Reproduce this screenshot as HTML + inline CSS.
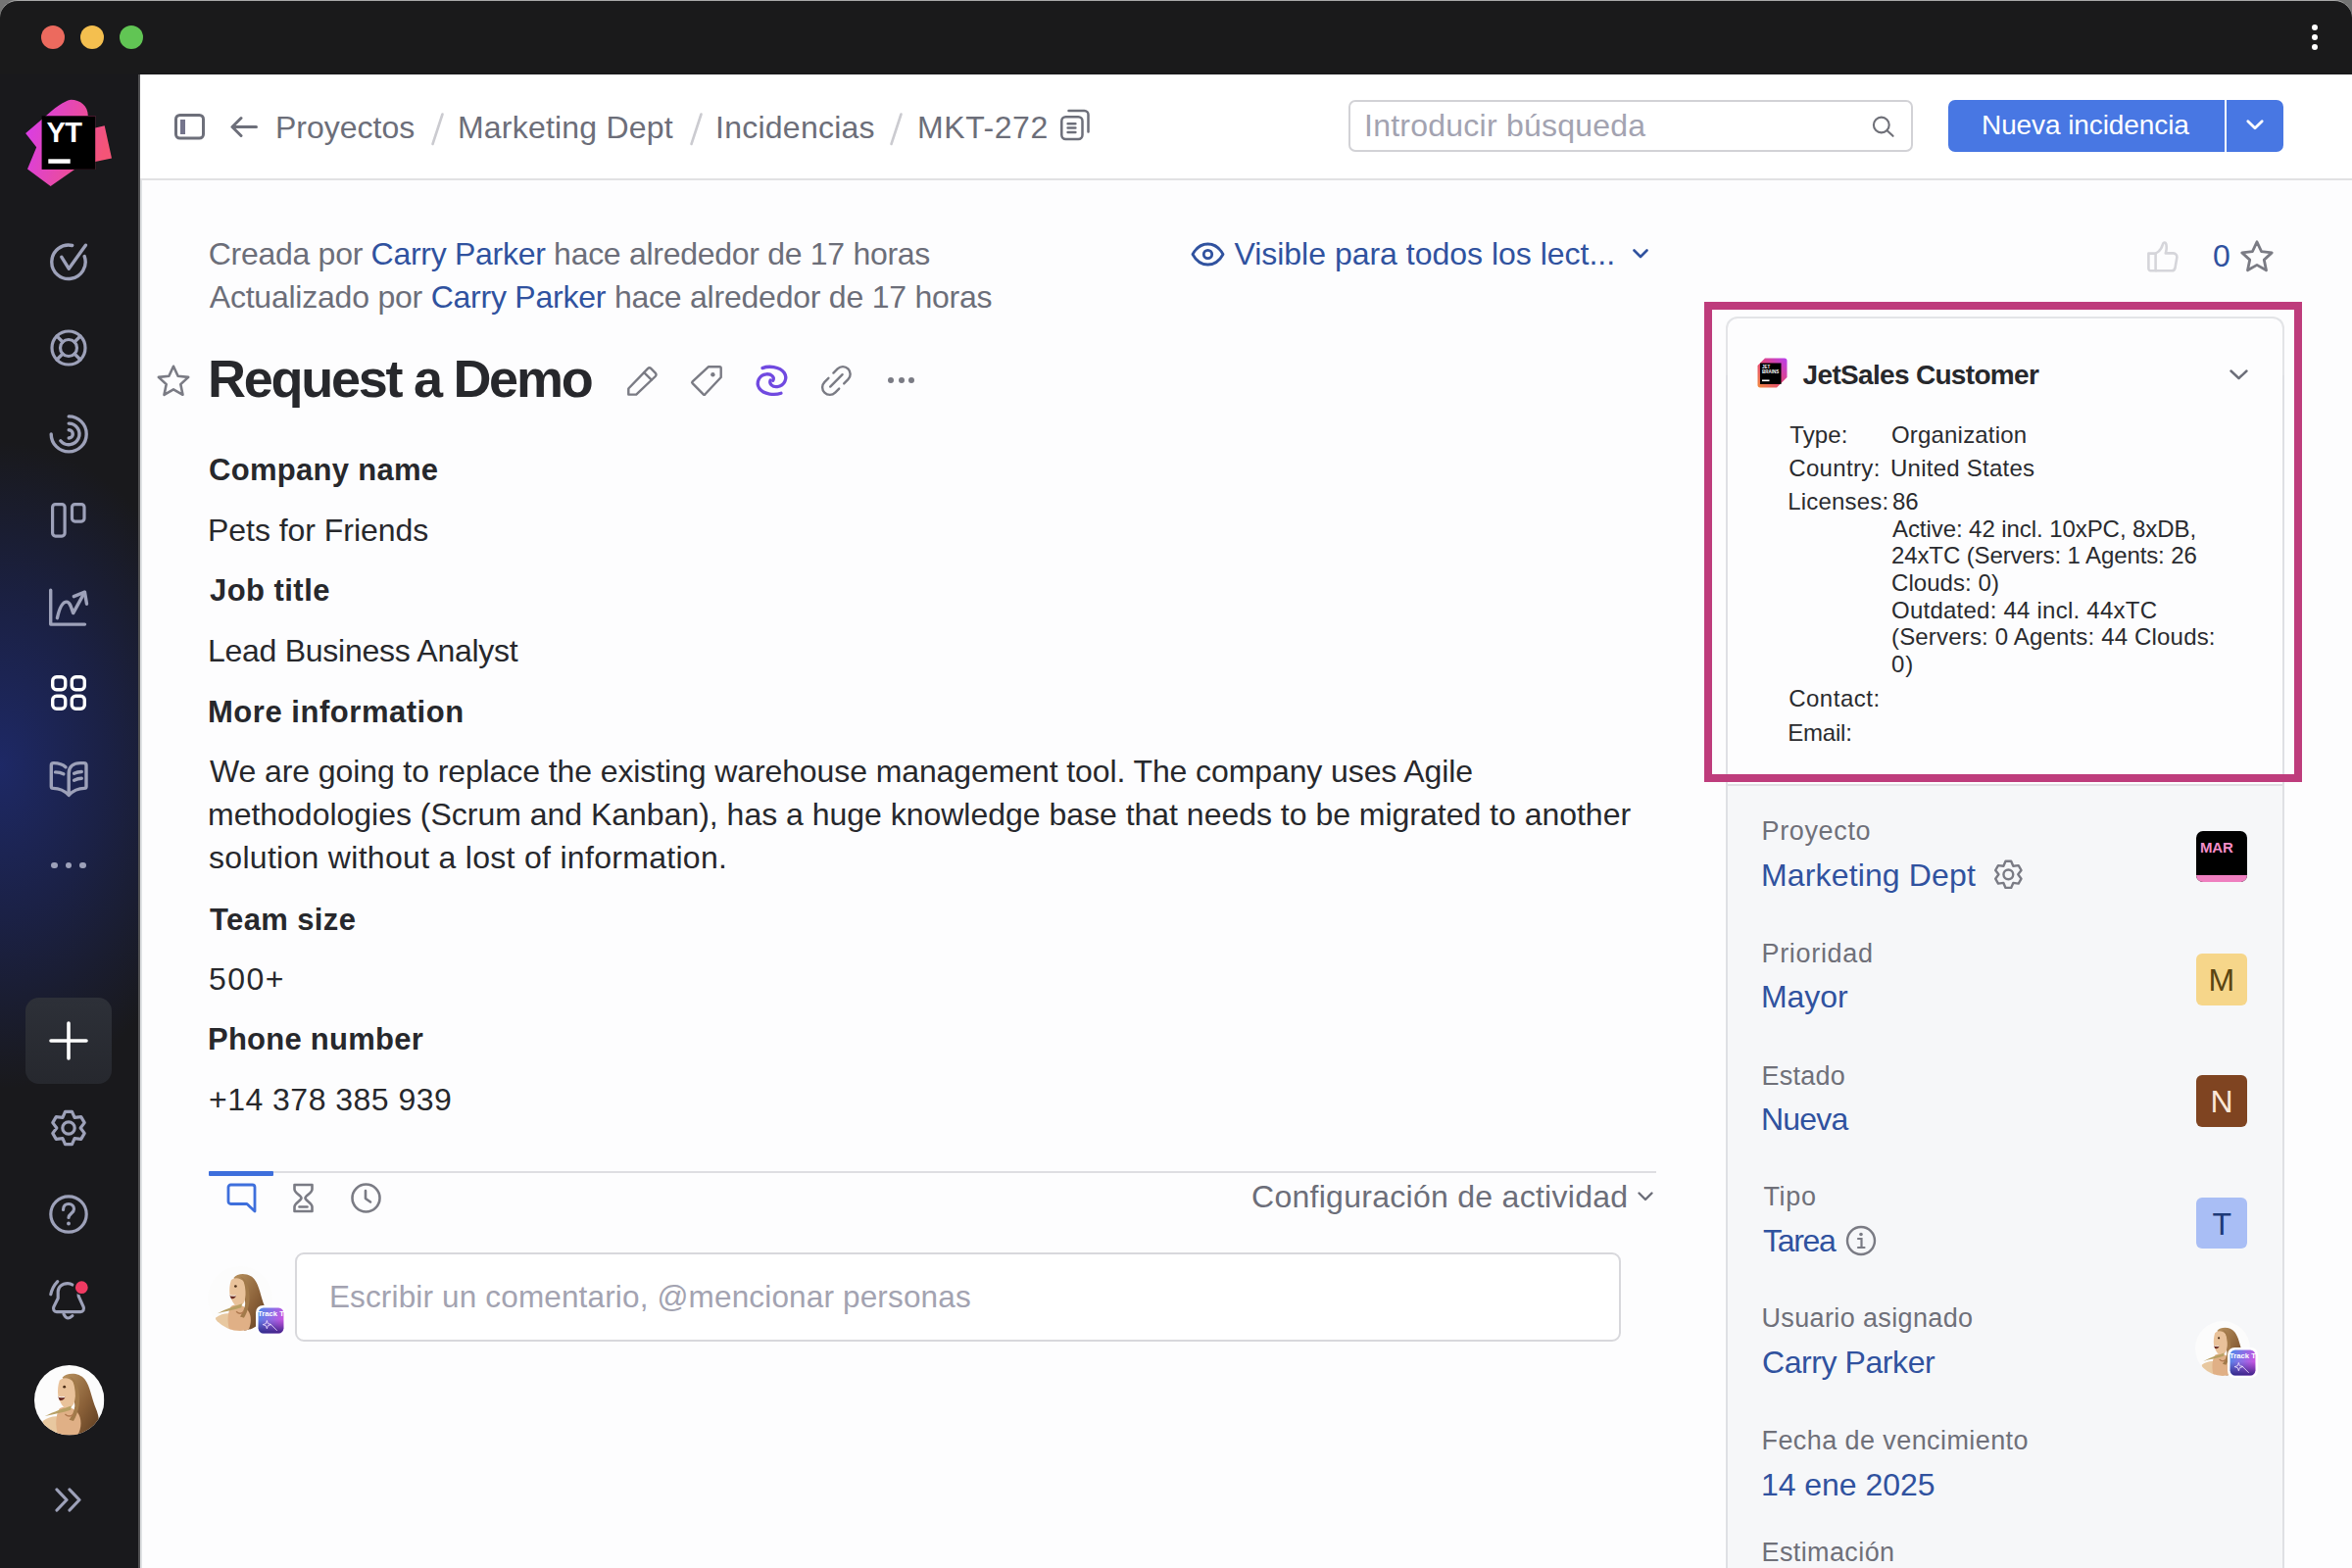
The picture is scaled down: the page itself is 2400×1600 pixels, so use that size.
<!DOCTYPE html><html><head><meta charset="utf-8"><style>
html,body{margin:0;padding:0;width:2400px;height:1600px;overflow:hidden;background:#747474;}
body{position:relative;font-family:"Liberation Sans",sans-serif;}
.t{position:absolute;line-height:1;white-space:nowrap;}
svg{overflow:visible}
</style></head><body>

<div style="position:absolute;left:0px;top:0px;width:2400px;height:1600px;background:#1a1a1b;border-radius:18px 18px 0 0;box-sizing:border-box;border-top:1.6px solid #a9a9a9;"></div>
<div style="position:absolute;left:42px;top:26px;width:24px;height:24px;background:#ec6a5e;border-radius:50%;"></div>
<div style="position:absolute;left:82px;top:26px;width:24px;height:24px;background:#f4bf4f;border-radius:50%;"></div>
<div style="position:absolute;left:122px;top:26px;width:24px;height:24px;background:#61c554;border-radius:50%;"></div>
<div style="position:absolute;left:2358.7px;top:24.7px;width:6.6px;height:6.6px;background:#fff;border-radius:50%;"></div>
<div style="position:absolute;left:2358.7px;top:34.7px;width:6.6px;height:6.6px;background:#fff;border-radius:50%;"></div>
<div style="position:absolute;left:2358.7px;top:44.7px;width:6.6px;height:6.6px;background:#fff;border-radius:50%;"></div>
<div style="position:absolute;left:0px;top:76px;width:141px;height:1524px;background:#19191c;"></div>
<div style="position:absolute;left:0px;top:76px;width:141px;height:1524px;background:radial-gradient(ellipse 230px 330px at 0px 705px, rgba(30,42,108,0.92) 0%, rgba(28,38,96,0.6) 48%, rgba(25,25,28,0) 100%);"></div>
<div style="position:absolute;left:141px;top:76px;width:2259px;height:1524px;background:#fdfdfe;"></div>
<div style="position:absolute;left:141px;top:76px;width:2px;height:1524px;background:#525254;"></div>
<div style="position:absolute;left:143px;top:76px;width:2257px;height:106px;background:#ffffff;"></div>
<div style="position:absolute;left:143px;top:182px;width:2257px;height:2px;background:#e1e1e3;"></div>
<div style="position:absolute;left:143px;top:184px;width:2px;height:1416px;background:#dfe2e4;"></div>
<svg style="position:absolute;left:20px;top:96px;" width="100" height="100" viewBox="0 0 100 100" fill="none">
<defs><linearGradient id="lg1" x1="0" y1="0" x2="1" y2="0.3"><stop offset="0" stop-color="#d63bf0"/><stop offset="1" stop-color="#f45477"/></linearGradient></defs>
<path d="M6.1 39.9 L27.4 21.7 C40 10 50 5.7 52.3 5.7 C62 5.7 69.8 12 69.8 22 L77.2 22 L77.2 34.4 L86.7 32.2 L94 65.4 L77.2 68.9 L77.2 77 L56 77 L31.6 94 L8 76.5 L17.2 54.2 Z" fill="url(#lg1)"/>
<rect x="22.6" y="22.3" width="54.6" height="54.6" fill="#000"/>
<rect x="29.3" y="66.3" width="22.4" height="4.5" fill="#fff"/>
</svg>
<div id="YT" class="t " style="left:47.50px;top:121.45px;font-size:29px;color:#fff;letter-spacing:-0.500px;font-weight:600;">YT</div>
<svg style="position:absolute;left:51px;top:248px;" width="38" height="38" viewBox="0 0 38 38" fill="none"><path d="M35.2 13.6 A17.2 17.2 0 1 1 22.7 2.5" stroke="#9da1b9" stroke-width="3.4" stroke-linecap="round" stroke-linejoin="round"/><path d="M11.9 14.3 L19.2 26.2 L36.4 2.2" stroke="#9da1b9" stroke-width="3.4" stroke-linecap="round" stroke-linejoin="round"/></svg>
<svg style="position:absolute;left:51px;top:336px;" width="38" height="38" viewBox="0 0 38 38" fill="none"><circle cx="19" cy="19" r="17" stroke="#9da1b9" stroke-width="3.2" stroke-linecap="round" stroke-linejoin="round"/><circle cx="19" cy="19" r="8.5" stroke="#9da1b9" stroke-width="3.2" stroke-linecap="round" stroke-linejoin="round"/><path d="M13 13 L7 7 M25 13 L31 7 M13 25 L7 31 M25 25 L31 31" stroke="#9da1b9" stroke-width="3.2" stroke-linecap="round" stroke-linejoin="round"/></svg>
<svg style="position:absolute;left:50px;top:423px;" width="40" height="40" viewBox="0 0 40 40" fill="none"><path d="M20.2 1.9 A18 18 0 1 1 2.2 19.9" stroke="#9da1b9" stroke-width="3.4" stroke-linecap="round" stroke-linejoin="round"/><path d="M20.2 9.1 A10.8 10.8 0 1 1 11.8 26.7" stroke="#9da1b9" stroke-width="3.4" stroke-linecap="round" stroke-linejoin="round"/><path d="M20.2 15.8 A4.1 4.1 0 0 1 20.2 24" stroke="#9da1b9" stroke-width="3.4" stroke-linecap="round" stroke-linejoin="round"/></svg>
<svg style="position:absolute;left:52px;top:513px;" width="36" height="36" viewBox="0 0 36 36" fill="none"><rect x="1.6" y="1.6" width="12.5" height="32.5" rx="3" stroke="#9da1b9" stroke-width="3.2" stroke-linecap="round" stroke-linejoin="round"/><rect x="21.5" y="1.6" width="12.5" height="17.5" rx="3" stroke="#9da1b9" stroke-width="3.2" stroke-linecap="round" stroke-linejoin="round"/></svg>
<svg style="position:absolute;left:50px;top:601px;" width="40" height="40" viewBox="0 0 40 40" fill="none"><path d="M1.7 1.2 V36.1 H36.5" stroke="#9da1b9" stroke-width="3.4" stroke-linecap="round" stroke-linejoin="round"/><path d="M8.4 29.7 C10.5 20 14 13.1 18 13.1 C21.5 13.1 23 20 24.7 24.6 L36.2 3.6" stroke="#9da1b9" stroke-width="3.4" stroke-linecap="round" stroke-linejoin="round"/><path d="M25.3 7.7 L36.5 3.2 L38.5 15.2" stroke="#9da1b9" stroke-width="3.4" stroke-linecap="round" stroke-linejoin="round"/></svg>
<svg style="position:absolute;left:52px;top:689px;" width="36" height="36" viewBox="0 0 36 36" fill="none"><rect x="1.7" y="1.7" width="13" height="13" rx="4" stroke="#ffffff" stroke-width="3.4" stroke-linejoin="round"/><rect x="21.3" y="1.7" width="13" height="13" rx="4" stroke="#ffffff" stroke-width="3.4" stroke-linejoin="round"/><rect x="1.7" y="21.3" width="13" height="13" rx="4" stroke="#ffffff" stroke-width="3.4" stroke-linejoin="round"/><rect x="21.3" y="21.3" width="13" height="13" rx="4" stroke="#ffffff" stroke-width="3.4" stroke-linejoin="round"/></svg>
<svg style="position:absolute;left:50px;top:777px;" width="40" height="37" viewBox="0 0 40 37" fill="none"><path d="M17 5.8 C14 3 9 1.6 5 1.6 H4.6 C3.3 1.6 2.3 2.6 2.3 3.9 V25.5 C2.3 26.6 3.2 27.4 4.3 27.4 C10 27.4 15.5 29.5 20.2 34.4 C24.9 29.5 30.4 27.4 36 27.4 C37.1 27.4 38 26.6 38 25.5 V3.9 C38 2.6 37 1.6 35.7 1.6 H32 C25 1.6 20.2 5.5 20.2 12 V33" stroke="#9da1b9" stroke-width="3.4" stroke-linecap="round" stroke-linejoin="round"/><path d="M6.5 10.9 C9.5 10.9 12.5 11.5 14.8 12.8 M25.6 12.2 C28 11 30.6 10.5 33.3 10.5 M25.6 19.2 C28 18 30.6 17.3 33.3 17.3" stroke="#9da1b9" stroke-width="3.4" stroke-linecap="round" stroke-linejoin="round"/></svg>
<div style="position:absolute;left:52.1px;top:879.6px;width:6.8px;height:6.8px;background:#9da1b9;border-radius:50%;"></div>
<div style="position:absolute;left:66.6px;top:879.6px;width:6.8px;height:6.8px;background:#9da1b9;border-radius:50%;"></div>
<div style="position:absolute;left:81.1px;top:879.6px;width:6.8px;height:6.8px;background:#9da1b9;border-radius:50%;"></div>
<div style="position:absolute;left:26px;top:1018px;width:88px;height:88px;background:linear-gradient(180deg,#2d3038,#26282e);border-radius:14px;"></div>
<svg style="position:absolute;left:50px;top:1042px;" width="40" height="40" viewBox="0 0 40 40" fill="none"><path d="M20 2 V38 M2 20 H38" stroke="#fff" stroke-width="3.6" stroke-linecap="round"/></svg>
<svg style="position:absolute;left:49.1px;top:1129.9px;" width="42" height="42" viewBox="0 0 42 42" fill="none"><path d="M17.52 4.30 L24.48 4.30 L27.09 10.45 L33.73 9.63 L37.21 15.66 L33.18 21.00 L37.21 26.34 L33.73 32.37 L27.09 31.55 L24.48 37.70 L17.52 37.70 L14.91 31.55 L8.27 32.37 L4.79 26.34 L8.82 21.00 L4.79 15.66 L8.27 9.63 L14.91 10.45 Z" stroke="#9da1b9" stroke-width="3.2" stroke-linejoin="round"/><circle cx="21.0" cy="21.0" r="6.2" stroke="#9da1b9" stroke-width="3.2"/></svg>
<svg style="position:absolute;left:50px;top:1219px;" width="40" height="40" viewBox="0 0 40 40" fill="none"><circle cx="20" cy="20" r="18.2" stroke="#9da1b9" stroke-width="3.2" stroke-linecap="round" stroke-linejoin="round"/><path d="M14.5 15.5 C14.5 11.5 17 9.5 20 9.5 C23.5 9.5 25.5 12 25.5 14.8 C25.5 19 20 19.5 20 23.5" stroke="#9da1b9" stroke-width="3.2" stroke-linecap="round" stroke-linejoin="round"/><circle cx="20" cy="29.5" r="1.2" fill="#9da1b9" stroke="#9da1b9" stroke-width="1.5"/></svg>
<svg style="position:absolute;left:40px;top:1290px;" width="60" height="70" viewBox="0 0 60 70" fill="none"><path d="M18.75 17.6 C15.5 21 13 25 11.8 30.8" stroke="#9da1b9" stroke-width="3.2" stroke-linecap="round" stroke-linejoin="round"/><path d="M33.9 21 C32.5 20 31 19.6 29 19.6 C23 19.6 19.2 23.5 19.2 28 V34.8 L14.8 43.6 C13.8 46 15.2 48.7 17.8 48.7 H42.2 C44.8 48.7 46.2 46 45.2 43.6 L40.2 32.6 V26" stroke="#9da1b9" stroke-width="3.2" stroke-linecap="round" stroke-linejoin="round"/><path d="M25 50.9 C26.5 54 28 55 29.5 55 C31 55 32.5 54 33.9 52.7" stroke="#9da1b9" stroke-width="3.2" stroke-linecap="round" stroke-linejoin="round"/><circle cx="43.3" cy="23.7" r="7.2" fill="#f03a62" stroke="#19191c" stroke-width="1.6"/></svg>
<svg style="position:absolute;left:34.6px;top:1392.8px;" width="71.4" height="71.4" viewBox="0 0 100 100" fill="none"><clipPath id="avc34_1392"><circle cx="50" cy="50" r="50"/></clipPath><g clip-path="url(#avc34_1392)"><rect x="0" y="0" width="100" height="100" fill="#fcfcfc"/>
    <defs><linearGradient id="hairg" x1="0" y1="0" x2="1" y2="1"><stop offset="0" stop-color="#b8925f"/><stop offset="0.55" stop-color="#8a6038"/><stop offset="1" stop-color="#5a3b20"/></linearGradient></defs>
    <path d="M40 18 C46 10 64 10 72 20 C80 30 82 48 88 62 C92 72 94 80 90 90 L70 100 L56 100 C60 84 62 70 58 56 C56 44 50 30 40 18 Z" fill="url(#hairg)"/>
    <path d="M12 80 C20 74 30 72 36 74 L36 100 L14 100 Z" fill="#e8c8a0"/>
    <path d="M36 62 C44 58 56 60 62 68 C68 76 68 90 62 100 L34 100 C30 88 30 72 36 62 Z" fill="#e0b086"/>
    <path d="M36 22 C40 17 50 17 56 24 C60 32 60 48 56 56 C52 62 46 64 42 60 C38 56 36 50 34 44 C33 36 34 28 36 22 Z" fill="#e9c29a"/>
    <path d="M50 16 C58 22 60 40 58 58 C57 66 54 72 50 78 L56 80 C62 70 66 56 64 40 C63 28 58 18 50 16 Z" fill="#a27a4a"/>
    <circle cx="43" cy="31" r="2" fill="#4a2e18"/>
    <path d="M34 45 C37 46 41 46 44 45.5 C43 49 40 51 36 50 Z" fill="#6a2c22"/>
    <path d="M34.5 45.3 C37 46 41 46 43.5 45.6" stroke="#fff" stroke-width="1.3" fill="none"/>
    <path d="M44 70 C48 74 52 74 56 70" stroke="#b07a50" stroke-width="2" fill="none"/>
    <path d="M53 58 C42 62 28 66 15 73 C26 70 40 68 52 64 Z" fill="#b8a064"/>
    </g></svg>
<svg style="position:absolute;left:56px;top:1518px;" width="30" height="25" viewBox="0 0 30 25" fill="none"><path d="M2 2 L12 12.5 L2 23 M15 2 L25 12.5 L15 23" stroke="#9da1b9" stroke-width="3.2" stroke-linecap="round" stroke-linejoin="round"/></svg>
<svg style="position:absolute;left:178px;top:116px;" width="31" height="27" viewBox="0 0 31 27" fill="none"><rect x="1.5" y="1.5" width="28" height="23.5" rx="4" stroke="#6d6f7a" stroke-width="3" stroke-linecap="round" stroke-linejoin="round"/><rect x="6" y="6" width="5" height="15" fill="#75758c"/></svg>
<svg style="position:absolute;left:235px;top:119px;" width="28" height="22" viewBox="0 0 28 22" fill="none"><path d="M26.5 10.5 H2 M11 1.5 L2 10.5 L11 19.5" stroke="#6d6f7a" stroke-width="3" stroke-linecap="round" stroke-linejoin="round"/></svg>
<div id="Proyectos" class="t " style="left:281.00px;top:113.91px;font-size:32px;color:#6c6e79;letter-spacing:-0.013px;">Proyectos</div>
<svg style="position:absolute;left:440px;top:115px;" width="13" height="34" viewBox="0 0 13 34" fill="none"><path d="M11.5 1.5 L1.5 32" stroke="#cbcbd0" stroke-width="2.6" stroke-linecap="round"/></svg>
<div id="MarketingDept" class="t " style="left:467.00px;top:113.91px;font-size:32px;color:#6c6e79;letter-spacing:0.208px;">Marketing Dept</div>
<svg style="position:absolute;left:704px;top:115px;" width="13" height="34" viewBox="0 0 13 34" fill="none"><path d="M11.5 1.5 L1.5 32" stroke="#cbcbd0" stroke-width="2.6" stroke-linecap="round"/></svg>
<div id="Incidencias" class="t " style="left:730.00px;top:113.91px;font-size:32px;color:#6c6e79;letter-spacing:0.250px;">Incidencias</div>
<svg style="position:absolute;left:908px;top:115px;" width="13" height="34" viewBox="0 0 13 34" fill="none"><path d="M11.5 1.5 L1.5 32" stroke="#cbcbd0" stroke-width="2.6" stroke-linecap="round"/></svg>
<div id="MKT272" class="t " style="left:936.00px;top:113.91px;font-size:32px;color:#6c6e79;letter-spacing:0.567px;">MKT-272</div>
<svg style="position:absolute;left:1081px;top:111px;" width="31" height="33" viewBox="0 0 31 33" fill="none"><path d="M9.5 2 H25.5 C27.7 2 29.5 3.8 29.5 6 V23.5" stroke="#6d6f7a" stroke-width="2.5" stroke-linecap="round" stroke-linejoin="round"/><rect x="2.3" y="8.2" width="21.2" height="22.8" rx="4.2" stroke="#6d6f7a" stroke-width="2.5" stroke-linecap="round" stroke-linejoin="round"/><path d="M8.6 15.2 H16.4 M8.6 19.6 H16.4 M8.6 24 H16.4" stroke="#6d6f7a" stroke-width="2.5" stroke-linecap="round" stroke-linejoin="round"/></svg>
<div style="position:absolute;left:1376px;top:102px;width:576px;height:52.5px;box-sizing:border-box;border:2px solid #d2d2d6;border-radius:7px;background:#fff;"></div>
<div id="Introducirbsqueda" class="t " style="left:1392.00px;top:112.41px;font-size:32px;color:#a3a3b1;letter-spacing:0.239px;">Introducir búsqueda</div>
<svg style="position:absolute;left:1910px;top:118px;" width="24" height="22" viewBox="0 0 24 22" fill="none"><circle cx="9.8" cy="9.5" r="7.9" stroke="#6f7078" stroke-width="2.1"/><path d="M15.6 15.2 L21.6 20.8" stroke="#6f7078" stroke-width="2.1" stroke-linecap="round"/></svg>
<div style="position:absolute;left:1988px;top:101.5px;width:341.5px;height:53px;background:#4877e3;border-radius:7px;"></div>
<div style="position:absolute;left:2269.5px;top:101.5px;width:2.5px;height:53px;background:#ffffff;"></div>
<div id="Nuevaincidencia" class="t " style="left:2022.00px;top:113.80px;font-size:28px;color:#ffffff;letter-spacing:-0.093px;">Nueva incidencia</div>
<svg style="position:absolute;left:2292px;top:122px;" width="18" height="11" viewBox="0 0 18 11" fill="none"><path d="M1.8 1.8 L9 8.8 L16.2 1.8" stroke="#fff" stroke-width="2.8" stroke-linecap="round" stroke-linejoin="round"/></svg>
<div id="CreadaporCarryParkerhace" class="t " style="left:212.80px;top:243.11px;font-size:32px;color:#6c6e79;letter-spacing:-0.289px;">Creada por <span style="color:#30529f">Carry Parker</span> hace alrededor de 17 horas</div>
<div id="ActualizadoporCarryParke" class="t " style="left:213.80px;top:286.71px;font-size:32px;color:#6c6e79;letter-spacing:-0.228px;">Actualizado por <span style="color:#30529f">Carry Parker</span> hace alrededor de 17 horas</div>
<svg style="position:absolute;left:1215px;top:247px;" width="35" height="25" viewBox="0 0 35 25" fill="none"><path d="M2 12.5 C6 5 11 2 17.5 2 C24 2 29 5 33 12.5 C29 20 24 23 17.5 23 C11 23 6 20 2 12.5 Z" stroke="#30529f" stroke-width="2.8" stroke-linejoin="round"/><circle cx="17.5" cy="12.5" r="4.2" stroke="#30529f" stroke-width="2.8"/></svg>
<div id="Visibleparatodosloslect" class="t " style="left:1259.40px;top:242.71px;font-size:32px;color:#30529f;letter-spacing:-0.010px;">Visible para todos los lect...</div>
<svg style="position:absolute;left:1666px;top:254px;" width="16" height="10" viewBox="0 0 16 10" fill="none"><path d="M1.5 1.5 L8 8 L14.5 1.5" stroke="#30529f" stroke-width="2.6" stroke-linecap="round" stroke-linejoin="round"/></svg>
<svg style="position:absolute;left:2190px;top:245px;" width="34" height="34" viewBox="0 0 34 34" fill="none"><path d="M2.4 13.6 H9.6 V31.3 H4.6 C3.4 31.3 2.4 30.3 2.4 29.1 Z" stroke="#d5d5da" stroke-width="2.6" stroke-linejoin="round"/><path d="M9.6 13.6 C13.2 12 15.8 8.6 17 4.2 C17.5 2.2 19.6 1.8 20.2 3.6 C21 6.2 20.8 10 19.8 13.4 H27.6 C30 13.4 31.7 15.6 31.3 18 L29.5 28.4 C29.1 30.1 27.8 31.3 26 31.3 H9.6" stroke="#d5d5da" stroke-width="2.6" stroke-linejoin="round"/></svg>
<div id="0" class="t " style="left:2258.00px;top:244.61px;font-size:32px;color:#30529f;">0</div>
<svg style="position:absolute;left:2286px;top:245px;" width="34" height="34" viewBox="0 0 34 34" fill="none"><path d="M17 1.8 L21.6 11.7 L32.2 12.9 L24.3 20.1 L26.5 30.8 L17 25.4 L7.5 30.8 L9.7 20.1 L1.8 12.9 L12.4 11.7 Z" stroke="#7a7b84" stroke-width="2.8" stroke-linejoin="round"/></svg>
<svg style="position:absolute;left:160px;top:372px;" width="34" height="34" viewBox="0 0 34 34" fill="none"><path d="M17 1.8 L21.6 11.7 L32.2 12.9 L24.3 20.1 L26.5 30.8 L17 25.4 L7.5 30.8 L9.7 20.1 L1.8 12.9 L12.4 11.7 Z" stroke="#7a7b84" stroke-width="2.6" stroke-linejoin="round"/></svg>
<div id="RequestaDemo" class="t " style="left:212.00px;top:359.49px;font-size:54px;color:#27282c;font-weight:700;letter-spacing:-2.269px;">Request a Demo</div>
<svg style="position:absolute;left:640px;top:373px;" width="31" height="31" viewBox="0 0 31 31" fill="none"><path d="M1.3 29.6 V23.5 L21 3.2 C22 2.2 23.4 2.2 24.4 3.2 L28.8 7.6 C29.8 8.6 29.8 10 28.8 11 L9.2 29.6 Z" stroke="#7a7b84" stroke-width="2.4" stroke-linecap="round" stroke-linejoin="round"/><path d="M17.2 7.2 L24.8 14.6" stroke="#7a7b84" stroke-width="2.4" stroke-linecap="round" stroke-linejoin="round"/></svg>
<svg style="position:absolute;left:705px;top:373px;" width="32" height="31" viewBox="0 0 32 31" fill="none"><path d="M17.8 1.3 H29.3 C30.1 1.3 30.7 1.9 30.7 2.7 V12 L14.5 29.3 C14 29.8 13.2 29.8 12.7 29.3 L1.6 18.2 C1.1 17.7 1.1 16.9 1.6 16.4 Z" stroke="#7a7b84" stroke-width="2.4" stroke-linecap="round" stroke-linejoin="round"/><circle cx="22.4" cy="9.2" r="2.2" fill="#7a7b84"/></svg>
<svg style="position:absolute;left:772px;top:373px;" width="31" height="31" viewBox="0 0 31 31" fill="none"><path d="M6 2.6 C12 0.2 23.5 0.6 28.3 7.5 C31.8 13 28.6 20.8 21.2 21.6 C16 22.2 12.6 18.6 14.2 15" stroke="#7049e0" stroke-width="3.3" stroke-linecap="round" stroke-linejoin="round"/><path d="M25 28.2 C19 30.4 7.4 30 2.6 23 C-0.8 17.4 2.6 9.4 10 8.8 C15.2 8.4 18.6 11.8 16.8 15.2" stroke="#7049e0" stroke-width="3.3" stroke-linecap="round" stroke-linejoin="round"/></svg>
<svg style="position:absolute;left:838px;top:373px;" width="31" height="31" viewBox="0 0 31 31" fill="none"><path d="M12.4 7.6 L16.6 3.4 C19.6 0.4 24.4 0.4 27.4 3.4 C30.4 6.4 30.4 11.2 27.4 14.2 L23.2 18.4" stroke="#7a7b84" stroke-width="2.4" stroke-linecap="round" stroke-linejoin="round"/><path d="M7.4 12.8 L3.4 16.8 C0.4 19.8 0.4 24.6 3.4 27.6 C6.4 30.6 11.2 30.6 14.2 27.6 L18.2 23.6" stroke="#7a7b84" stroke-width="2.4" stroke-linecap="round" stroke-linejoin="round"/><path d="M9.2 21.6 L21.6 9.2" stroke="#7a7b84" stroke-width="2.4" stroke-linecap="round" stroke-linejoin="round"/></svg>
<div style="position:absolute;left:905.6px;top:385.3px;width:6px;height:6px;background:#7a7b84;border-radius:50%;"></div>
<div style="position:absolute;left:916.5px;top:385.3px;width:6px;height:6px;background:#7a7b84;border-radius:50%;"></div>
<div style="position:absolute;left:927.4px;top:385.3px;width:6px;height:6px;background:#7a7b84;border-radius:50%;"></div>
<div id="Companyname" class="t " style="left:213.00px;top:464.36px;font-size:31px;color:#27282c;font-weight:700;letter-spacing:0.291px;">Company name</div>
<div id="PetsforFriends" class="t " style="left:212.00px;top:525.21px;font-size:32px;color:#27282c;letter-spacing:-0.040px;">Pets for Friends</div>
<div id="Jobtitle" class="t " style="left:214.00px;top:587.06px;font-size:31px;color:#27282c;font-weight:700;letter-spacing:0.450px;">Job title</div>
<div id="LeadBusinessAnalyst" class="t " style="left:212.00px;top:648.31px;font-size:32px;color:#27282c;letter-spacing:-0.265px;">Lead Business Analyst</div>
<div id="Moreinformation" class="t " style="left:212.00px;top:710.76px;font-size:31px;color:#27282c;font-weight:700;letter-spacing:0.533px;">More information</div>
<div id="Wearegoingtoreplacetheex" class="t " style="left:214.00px;top:770.91px;font-size:32px;color:#27282c;letter-spacing:-0.098px;">We are going to replace the existing warehouse management tool. The company uses Agile</div>
<div id="methodologiesScrumandKan" class="t " style="left:212.00px;top:814.61px;font-size:32px;color:#27282c;letter-spacing:-0.014px;">methodologies (Scrum and Kanban), has a huge knowledge base that needs to be migrated to another</div>
<div id="solutionwithoutalostofin" class="t " style="left:213.00px;top:858.51px;font-size:32px;color:#27282c;letter-spacing:0.297px;">solution without a lost of information.</div>
<div id="Teamsize" class="t " style="left:214.00px;top:922.76px;font-size:31px;color:#27282c;font-weight:700;letter-spacing:0.388px;">Team size</div>
<div id="500" class="t " style="left:213.00px;top:982.81px;font-size:32px;color:#27282c;letter-spacing:1.467px;">500+</div>
<div id="Phonenumber" class="t " style="left:212.00px;top:1045.06px;font-size:31px;color:#27282c;font-weight:700;letter-spacing:0.245px;">Phone number</div>
<div id="14378385939" class="t " style="left:213.00px;top:1105.61px;font-size:32px;color:#27282c;letter-spacing:0.478px;">+14 378 385 939</div>
<div style="position:absolute;left:213px;top:1195px;width:1477px;height:2px;background:#dedee2;"></div>
<div style="position:absolute;left:213px;top:1195px;width:66px;height:5px;background:#3e6fdc;border-radius:1px;"></div>
<svg style="position:absolute;left:231px;top:1207px;" width="31" height="31" viewBox="0 0 31 31" fill="none"><path d="M4.5 2 H26.5 C27.9 2 29 3.1 29 4.5 V29 L21 21.5 H4.5 C3.1 21.5 2 20.4 2 19 V4.5 C2 3.1 3.1 2 4.5 2 Z" stroke="#3e6fdc" stroke-width="2.8" stroke-linejoin="round"/></svg>
<svg style="position:absolute;left:298px;top:1207px;" width="23" height="31" viewBox="0 0 23 31" fill="none"><path d="M2.5 2 H20.5 V6.5 C20.5 10.5 13.5 13 13.5 15.5 C13.5 18 20.5 20.5 20.5 24.5 V29 H2.5 V24.5 C2.5 20.5 9.5 18 9.5 15.5 C9.5 13 2.5 10.5 2.5 6.5 Z" stroke="#7a7b84" stroke-width="2.6" stroke-linecap="round" stroke-linejoin="round"/><path d="M7.5 24.5 H15.5" stroke="#7a7b84" stroke-width="2.6" stroke-linecap="round" stroke-linejoin="round"/></svg>
<svg style="position:absolute;left:358px;top:1207px;" width="31" height="31" viewBox="0 0 31 31" fill="none"><circle cx="15.5" cy="15.5" r="14" stroke="#7a7b84" stroke-width="2.6" stroke-linecap="round" stroke-linejoin="round"/><path d="M15 8 V16 L20 19.5" stroke="#7a7b84" stroke-width="2.6" stroke-linecap="round" stroke-linejoin="round"/></svg>
<div id="Configuracindeactividad" class="t " style="left:1277.00px;top:1205.31px;font-size:32px;color:#6c6e79;letter-spacing:0.280px;">Configuración de actividad</div>
<svg style="position:absolute;left:1671px;top:1216px;" width="16" height="11" viewBox="0 0 16 11" fill="none"><path d="M1.5 1.5 L8 8 L14.5 1.5" stroke="#6c6e79" stroke-width="2.4" stroke-linecap="round" stroke-linejoin="round"/></svg>
<svg style="position:absolute;left:212px;top:1292px;" width="66" height="66" viewBox="0 0 100 100" fill="none"><clipPath id="avc212_1292"><circle cx="50" cy="50" r="50"/></clipPath><g clip-path="url(#avc212_1292)"><rect x="0" y="0" width="100" height="100" fill="#fcfcfc"/>
    <defs><linearGradient id="hairg" x1="0" y1="0" x2="1" y2="1"><stop offset="0" stop-color="#b8925f"/><stop offset="0.55" stop-color="#8a6038"/><stop offset="1" stop-color="#5a3b20"/></linearGradient></defs>
    <path d="M40 18 C46 10 64 10 72 20 C80 30 82 48 88 62 C92 72 94 80 90 90 L70 100 L56 100 C60 84 62 70 58 56 C56 44 50 30 40 18 Z" fill="url(#hairg)"/>
    <path d="M12 80 C20 74 30 72 36 74 L36 100 L14 100 Z" fill="#e8c8a0"/>
    <path d="M36 62 C44 58 56 60 62 68 C68 76 68 90 62 100 L34 100 C30 88 30 72 36 62 Z" fill="#e0b086"/>
    <path d="M36 22 C40 17 50 17 56 24 C60 32 60 48 56 56 C52 62 46 64 42 60 C38 56 36 50 34 44 C33 36 34 28 36 22 Z" fill="#e9c29a"/>
    <path d="M50 16 C58 22 60 40 58 58 C57 66 54 72 50 78 L56 80 C62 70 66 56 64 40 C63 28 58 18 50 16 Z" fill="#a27a4a"/>
    <circle cx="43" cy="31" r="2" fill="#4a2e18"/>
    <path d="M34 45 C37 46 41 46 44 45.5 C43 49 40 51 36 50 Z" fill="#6a2c22"/>
    <path d="M34.5 45.3 C37 46 41 46 43.5 45.6" stroke="#fff" stroke-width="1.3" fill="none"/>
    <path d="M44 70 C48 74 52 74 56 70" stroke="#b07a50" stroke-width="2" fill="none"/>
    <path d="M53 58 C42 62 28 66 15 73 C26 70 40 68 52 64 Z" fill="#b8a064"/>
    </g></svg>
<svg style="position:absolute;left:261px;top:1332px;" width="31" height="31" viewBox="0 0 30 30" fill="none"><defs><linearGradient id="ybg" x1="0" y1="0" x2="1" y2="0.35"><stop offset="0" stop-color="#4a8aea"/><stop offset="1" stop-color="#c656e2"/></linearGradient>
    <linearGradient id="ybg2" x1="0" y1="0" x2="0" y2="1"><stop offset="0.45" stop-color="#2a1f80" stop-opacity="0"/><stop offset="1" stop-color="#241a78" stop-opacity="0.85"/></linearGradient></defs>
    <rect x="0" y="0" width="30" height="30" rx="7" fill="#fff"/>
    <rect x="2.5" y="2.5" width="25" height="25" rx="5" fill="url(#ybg)"/>
    <rect x="2.5" y="2.5" width="25" height="25" rx="5" fill="url(#ybg2)"/>
    <text x="15" y="10.8" font-family="Liberation Sans" font-size="7.5" font-weight="700" fill="#fff" text-anchor="middle">Track T</text>
    <path d="M11 15 L12 18 L15 19 L12 20 L11 23 L10 20 L7 19 L10 18 Z M14 18 L21 25" stroke="#f0e4ff" stroke-width="0.8" fill="none"/></svg>
<div style="position:absolute;left:301px;top:1277.5px;width:1353px;height:91px;box-sizing:border-box;border:2px solid #d8d8dc;border-radius:9px;background:#fff;"></div>
<div id="Escribiruncomentariomenc" class="t " style="left:335.90px;top:1308.34px;font-size:31.5px;color:#a3a3b1;letter-spacing:0.155px;">Escribir un comentario, @mencionar personas</div>
<div style="position:absolute;left:1761px;top:800px;width:570px;height:800px;background:#f6f7f9;"></div>
<div style="position:absolute;left:1761px;top:336px;width:2px;height:1264px;background:#dfe0e4;"></div>
<div style="position:absolute;left:2329px;top:336px;width:2px;height:1264px;background:#dfe0e4;"></div>
<div style="position:absolute;left:1761px;top:800px;width:570px;height:2px;background:#dfe0e4;"></div>
<div style="position:absolute;left:1761px;top:323px;width:570px;height:60px;box-sizing:border-box;border:2px solid #e3e4e7;border-bottom:none;border-radius:12px 12px 0 0;background:#fdfdfe;"></div>
<div style="position:absolute;left:1763px;top:370px;width:566px;height:430px;background:#fdfdfe;"></div>
<svg style="position:absolute;left:1793px;top:365px;" width="31" height="31" viewBox="0 0 31 31" fill="none"><defs><linearGradient id="jbg" x1="0" y1="1" x2="1" y2="0"><stop offset="0" stop-color="#f08a3c"/><stop offset="0.5" stop-color="#e2457a"/><stop offset="1" stop-color="#b83ff0"/></linearGradient></defs>
<path d="M8 0.5 H28 C29.5 0.5 30.5 1.5 30.5 3 V20 L20 30.5 H3 C1.5 30.5 0.5 29.5 0.5 28 V8 Z" fill="url(#jbg)"/>
<rect x="3" y="5.5" width="21.5" height="21.5" fill="#000"/>
<rect x="5" y="22.5" width="7.5" height="1.6" fill="#fff"/>
<text x="5" y="11" font-family="Liberation Sans" font-size="4.5" font-weight="700" fill="#fff">JET</text>
<text x="5" y="15.5" font-family="Liberation Sans" font-size="4.5" font-weight="700" fill="#fff">BRAINS</text>
</svg>
<div id="JetSalesCustomer" class="t " style="left:1839.60px;top:368.80px;font-size:28px;color:#27282c;font-weight:700;letter-spacing:-0.681px;">JetSales Customer</div>
<svg style="position:absolute;left:2275px;top:377px;" width="19" height="11" viewBox="0 0 19 11" fill="none"><path d="M1.5 1.5 L9.5 9 L17.5 1.5" stroke="#6c6e79" stroke-width="2.4" stroke-linecap="round" stroke-linejoin="round"/></svg>
<div id="Type" class="t " style="left:1826.20px;top:431.68px;font-size:24px;color:#2a2b2f;letter-spacing:0.125px;">Type:</div>
<div id="Organization" class="t " style="left:1930.00px;top:431.68px;font-size:24px;color:#2a2b2f;letter-spacing:0.182px;">Organization</div>
<div id="Country" class="t " style="left:1825.20px;top:466.18px;font-size:24px;color:#2a2b2f;letter-spacing:0.357px;">Country:</div>
<div id="UnitedStates" class="t " style="left:1929.00px;top:466.18px;font-size:24px;color:#2a2b2f;letter-spacing:0.250px;">United States</div>
<div id="Licenses" class="t " style="left:1824.20px;top:500.38px;font-size:24px;color:#2a2b2f;letter-spacing:0.188px;">Licenses:</div>
<div id="86" class="t " style="left:1931.00px;top:500.38px;font-size:24px;color:#2a2b2f;">86</div>
<div id="Active42incl10xPC8xDB" class="t " style="left:1931.00px;top:527.68px;font-size:24px;color:#2a2b2f;letter-spacing:-0.071px;">Active: 42 incl. 10xPC, 8xDB,</div>
<div id="24xTCServers1Agents26" class="t " style="left:1930.00px;top:555.48px;font-size:24px;color:#2a2b2f;letter-spacing:-0.111px;">24xTC (Servers: 1 Agents: 26</div>
<div id="Clouds0" class="t " style="left:1930.00px;top:583.28px;font-size:24px;color:#2a2b2f;letter-spacing:0.056px;">Clouds: 0)</div>
<div id="Outdated44incl44xTC" class="t " style="left:1930.00px;top:611.28px;font-size:24px;color:#2a2b2f;letter-spacing:0.239px;">Outdated: 44 incl. 44xTC</div>
<div id="Servers0Agents44Clouds" class="t " style="left:1930.00px;top:638.38px;font-size:24px;color:#2a2b2f;letter-spacing:0.172px;">(Servers: 0 Agents: 44 Clouds:</div>
<div id="0_2" class="t " style="left:1930.00px;top:666.18px;font-size:24px;color:#2a2b2f;letter-spacing:1.000px;">0)</div>
<div id="Contact" class="t " style="left:1825.20px;top:700.58px;font-size:24px;color:#2a2b2f;letter-spacing:0.500px;">Contact:</div>
<div id="Email" class="t " style="left:1824.20px;top:735.68px;font-size:24px;color:#2a2b2f;letter-spacing:-0.200px;">Email:</div>
<div style="position:absolute;left:1739px;top:308px;width:610px;height:490px;box-sizing:border-box;border:8.6px solid #be3c7c;"></div>
<div id="Proyecto" class="t " style="left:1797.50px;top:835.14px;font-size:27px;color:#6f7079;letter-spacing:0.643px;">Proyecto</div>
<div id="MarketingDept_2" class="t " style="left:1797.00px;top:877.31px;font-size:32px;color:#30529f;letter-spacing:0.146px;">Marketing Dept</div>
<div id="Prioridad" class="t " style="left:1797.50px;top:959.54px;font-size:27px;color:#6f7079;letter-spacing:0.675px;">Prioridad</div>
<div id="Mayor" class="t " style="left:1797.00px;top:1001.41px;font-size:32px;color:#30529f;letter-spacing:-0.075px;">Mayor</div>
<div id="Estado" class="t " style="left:1797.50px;top:1084.54px;font-size:27px;color:#6f7079;letter-spacing:0.260px;">Estado</div>
<div id="Nueva" class="t " style="left:1797.00px;top:1125.51px;font-size:32px;color:#30529f;letter-spacing:-0.825px;">Nueva</div>
<div id="Tipo" class="t " style="left:1799.50px;top:1208.14px;font-size:27px;color:#6f7079;letter-spacing:0.633px;">Tipo</div>
<div id="Tarea" class="t " style="left:1799.00px;top:1249.61px;font-size:32px;color:#30529f;letter-spacing:-1.325px;">Tarea</div>
<div id="Usuarioasignado" class="t " style="left:1797.50px;top:1332.14px;font-size:27px;color:#6f7079;letter-spacing:0.367px;">Usuario asignado</div>
<div id="CarryParker" class="t " style="left:1798.00px;top:1373.71px;font-size:32px;color:#30529f;letter-spacing:-0.427px;">Carry Parker</div>
<div id="Fechadevencimiento" class="t " style="left:1797.50px;top:1456.94px;font-size:27px;color:#6f7079;letter-spacing:0.416px;">Fecha de vencimiento</div>
<div id="14ene2025" class="t " style="left:1797.00px;top:1498.61px;font-size:32px;color:#30529f;letter-spacing:-0.050px;">14 ene 2025</div>
<div id="Estimacin" class="t " style="left:1797.50px;top:1570.74px;font-size:27px;color:#6f7079;letter-spacing:0.389px;">Estimación</div>
<svg style="position:absolute;left:2032.2px;top:875px;" width="34.7" height="34.7" viewBox="0 0 34.7 34.7" fill="none"><path d="M14.52 3.77 L20.18 3.77 L22.30 8.77 L27.70 8.11 L30.53 13.01 L27.26 17.35 L30.53 21.69 L27.70 26.59 L22.30 25.93 L20.18 30.93 L14.52 30.93 L12.40 25.93 L7.00 26.59 L4.17 21.69 L7.45 17.35 L4.17 13.01 L7.00 8.11 L12.40 8.77 Z" stroke="#7a7b84" stroke-width="2.4" stroke-linejoin="round"/><circle cx="17.35" cy="17.35" r="4.9" stroke="#7a7b84" stroke-width="2.4"/></svg>
<svg style="position:absolute;left:1883px;top:1250px;" width="32" height="32" viewBox="0 0 32 32" fill="none"><circle cx="16" cy="16" r="14" stroke="#7a7b84" stroke-width="2.4"/><circle cx="16" cy="9.5" r="1.8" fill="#7a7b84"/><path d="M13 14 H16.5 V23 M13 23 H19.5" stroke="#7a7b84" stroke-width="2.2" stroke-linecap="round"/></svg>
<div style="position:absolute;left:2241px;top:848px;width:52px;height:52px;background:#000;border-radius:7px;overflow:hidden;"></div>
<div style="position:absolute;left:2241px;top:893px;width:52px;height:7px;background:#ef7fc0;border-radius:0 0 7px 7px;"></div>
<div id="MAR" class="t " style="left:2245.00px;top:857.30px;font-size:15px;color:#f48dc8;font-weight:700;letter-spacing:-0.200px;">MAR</div>
<div style="position:absolute;left:2241px;top:973px;width:52px;height:52.5px;background:#f6d68a;border-radius:6px;"></div>
<div id="M" class="t " style="left:2253.50px;top:983.91px;font-size:32px;color:#5b4511;">M</div>
<div style="position:absolute;left:2241px;top:1097px;width:52px;height:52.5px;background:#7f4421;border-radius:6px;"></div>
<div id="N" class="t " style="left:2255.50px;top:1107.91px;font-size:32px;color:#fde7d7;">N</div>
<div style="position:absolute;left:2241px;top:1222px;width:52px;height:52px;background:#a9bef5;border-radius:6px;"></div>
<div id="T" class="t " style="left:2257.50px;top:1232.91px;font-size:32px;color:#1e3a77;">T</div>
<svg style="position:absolute;left:2240px;top:1348px;" width="56" height="56" viewBox="0 0 100 100" fill="none"><clipPath id="avc2240_1348"><circle cx="50" cy="50" r="50"/></clipPath><g clip-path="url(#avc2240_1348)"><rect x="0" y="0" width="100" height="100" fill="#fcfcfc"/>
    <defs><linearGradient id="hairg" x1="0" y1="0" x2="1" y2="1"><stop offset="0" stop-color="#b8925f"/><stop offset="0.55" stop-color="#8a6038"/><stop offset="1" stop-color="#5a3b20"/></linearGradient></defs>
    <path d="M40 18 C46 10 64 10 72 20 C80 30 82 48 88 62 C92 72 94 80 90 90 L70 100 L56 100 C60 84 62 70 58 56 C56 44 50 30 40 18 Z" fill="url(#hairg)"/>
    <path d="M12 80 C20 74 30 72 36 74 L36 100 L14 100 Z" fill="#e8c8a0"/>
    <path d="M36 62 C44 58 56 60 62 68 C68 76 68 90 62 100 L34 100 C30 88 30 72 36 62 Z" fill="#e0b086"/>
    <path d="M36 22 C40 17 50 17 56 24 C60 32 60 48 56 56 C52 62 46 64 42 60 C38 56 36 50 34 44 C33 36 34 28 36 22 Z" fill="#e9c29a"/>
    <path d="M50 16 C58 22 60 40 58 58 C57 66 54 72 50 78 L56 80 C62 70 66 56 64 40 C63 28 58 18 50 16 Z" fill="#a27a4a"/>
    <circle cx="43" cy="31" r="2" fill="#4a2e18"/>
    <path d="M34 45 C37 46 41 46 44 45.5 C43 49 40 51 36 50 Z" fill="#6a2c22"/>
    <path d="M34.5 45.3 C37 46 41 46 43.5 45.6" stroke="#fff" stroke-width="1.3" fill="none"/>
    <path d="M44 70 C48 74 52 74 56 70" stroke="#b07a50" stroke-width="2" fill="none"/>
    <path d="M53 58 C42 62 28 66 15 73 C26 70 40 68 52 64 Z" fill="#b8a064"/>
    </g></svg>
<svg style="position:absolute;left:2273px;top:1374.5px;" width="31" height="31" viewBox="0 0 30 30" fill="none"><defs><linearGradient id="ybg" x1="0" y1="0" x2="1" y2="0.35"><stop offset="0" stop-color="#4a8aea"/><stop offset="1" stop-color="#c656e2"/></linearGradient>
    <linearGradient id="ybg2" x1="0" y1="0" x2="0" y2="1"><stop offset="0.45" stop-color="#2a1f80" stop-opacity="0"/><stop offset="1" stop-color="#241a78" stop-opacity="0.85"/></linearGradient></defs>
    <rect x="0" y="0" width="30" height="30" rx="7" fill="#fff"/>
    <rect x="2.5" y="2.5" width="25" height="25" rx="5" fill="url(#ybg)"/>
    <rect x="2.5" y="2.5" width="25" height="25" rx="5" fill="url(#ybg2)"/>
    <text x="15" y="10.8" font-family="Liberation Sans" font-size="7.5" font-weight="700" fill="#fff" text-anchor="middle">Track T</text>
    <path d="M11 15 L12 18 L15 19 L12 20 L11 23 L10 20 L7 19 L10 18 Z M14 18 L21 25" stroke="#f0e4ff" stroke-width="0.8" fill="none"/></svg>
</body></html>
